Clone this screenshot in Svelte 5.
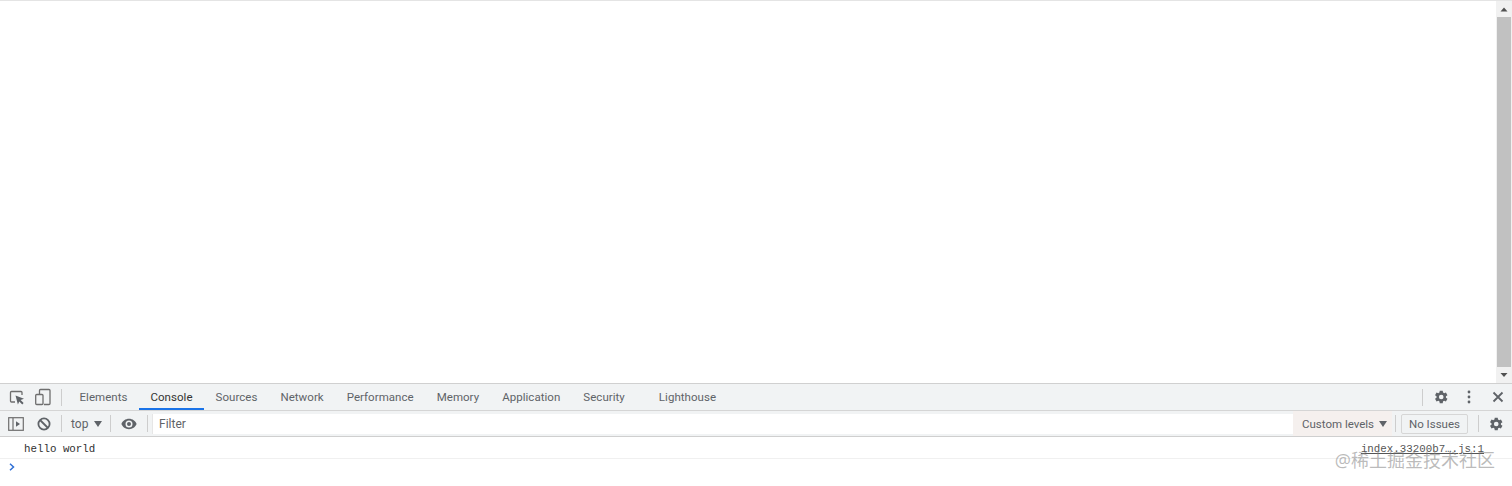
<script>
  const tabs = ['Elements', 'Console', 'Sources', 'Network', 'Performance', 'Memory', 'Application', 'Security', 'Lighthouse'];
</script>

<div class="window">
  <div class="page">
    <div class="viewport"></div>
    <div class="scrollbar">
      <svg class="arrow" width="16" height="16" viewBox="0 0 16 16"><path d="M4.500 10.500 8 6.500l3.500 4z" fill="#505050" /></svg>
      <div class="track"><div class="thumb"></div></div>
      <svg class="arrow" width="16" height="16" viewBox="0 0 16 16"><path d="M4.500 6 8 10l3.500-4z" fill="#505050" /></svg>
    </div>
  </div>

  <div class="devtools">
    <div class="tabbar">
      <button class="icon first" aria-label="Inspect">
        <svg width="18" height="18" viewBox="0 0 18 18" fill="none">
          <path d="M7 14H3.500a1 1 0 0 1-1-1V4.500a1 1 0 0 1 1-1H13a1 1 0 0 1 1 1V7" stroke="#6e6e6e" stroke-width="1.300" />
          <path d="M7.500 7.500 16 10.800l-3.400 1.300 3 3-1.300 1.300-3-3-1.400 3.200z" fill="#5f6368" />
        </svg>
      </button>
      <button class="icon" aria-label="Device">
        <svg width="18" height="18" viewBox="0 0 18 18" fill="none" stroke="#6e6e6e" stroke-width="1.300">
          <path d="M5.500 6V2.500a1 1 0 0 1 1-1h8.500a1 1 0 0 1 1 1v13a1 1 0 0 1-1 1H10" />
          <rect x="1.700" y="6.500" width="7.300" height="10" rx="1" />
        </svg>
      </button>
      <span class="sep tab-sep"></span>
      <nav class="tabs">
        {#each tabs as tab}
          <span class="tab" class:active={tab === 'Console'} class:last={tab === 'Lighthouse'}>{tab}</span>
        {/each}
      </nav>
      <div class="spacer"></div>
      <span class="sep"></span>
      <button class="icon right" aria-label="Settings">
        <svg width="16" height="16" viewBox="0 0 24 24"><path fill="#5f6368" fill-rule="evenodd" d="M19.400 13a7.500 7.500 0 0 0 0-2l2.300-1.800-2.300-3.900-2.700 1.100a7.500 7.500 0 0 0-1.700-1L14.600 2.500h-4.500L9.700 5.400a7.500 7.500 0 0 0-1.700 1L5.300 5.300 3 9.200 5.300 11a7.500 7.500 0 0 0 0 2L3 14.800l2.300 3.900L8 17.600a7.500 7.500 0 0 0 1.700 1l.4 2.900h4.500l.4-2.900a7.500 7.500 0 0 0 1.700-1l2.700 1.100 2.300-3.900zM12.350 15.500a3.500 3.500 0 1 1 0-7 3.500 3.500 0 0 1 0 7z" /></svg>
      </button>
      <button class="icon dots" aria-label="More">
        <svg width="4" height="14" viewBox="0 0 4 14"><circle cx="2" cy="2" r="1.400" fill="#5f6368" /><circle cx="2" cy="7" r="1.400" fill="#5f6368" /><circle cx="2" cy="12" r="1.400" fill="#5f6368" /></svg>
      </button>
      <button class="icon close" aria-label="Close">
        <svg width="12" height="12" viewBox="0 0 12 12"><path d="M1.500 1.500l9 9m0-9l-9 9" stroke="#5f6368" stroke-width="1.800" /></svg>
      </button>
    </div>

    <div class="toolbar">
      <button class="icon first" aria-label="Show sidebar">
        <svg width="16" height="14" viewBox="0 0 16 14" fill="none">
          <rect x="0.700" y="0.700" width="14.600" height="12.600" stroke="#6e6e6e" stroke-width="1.200" />
          <path d="M5 1v12" stroke="#6e6e6e" stroke-width="1.200" />
          <path d="M8 4.200 12 7 8 9.800z" fill="#5f6368" />
        </svg>
      </button>
      <button class="icon clear" aria-label="Clear console">
        <svg width="14" height="14" viewBox="0 0 14 14" fill="none" stroke="#5f6368" stroke-width="1.800">
          <circle cx="7" cy="7" r="5.600" />
          <path d="M3 3l8 8" />
        </svg>
      </button>
      <span class="sep ctx-sep"></span>
      <span class="context">top<i class="caret"></i></span>
      <span class="sep"></span>
      <button class="icon eye" aria-label="Live expressions">
        <svg width="16" height="12" viewBox="0 0 16 12"><path fill="#5f6368" fill-rule="evenodd" d="M8 .8C4.500.8 1.600 3 .4 6c1.200 3 4.100 5.200 7.600 5.200S14.400 9 15.600 6C14.400 3 11.500.8 8 .8zM8 9.500a3.500 3.500 0 1 1 0-7 3.500 3.500 0 0 1 0 7zM8 4a2 2 0 1 0 0 4 2 2 0 0 0 0-4z" /></svg>
      </button>
      <span class="sep"></span>
      <div class="filter">Filter</div>
      <span class="levels">Custom levels<i class="caret"></i></span>
      <span class="sep"></span>
      <span class="issues">No Issues</span>
      <span class="sep"></span>
      <button class="icon gear" aria-label="Console settings">
        <svg width="16" height="16" viewBox="0 0 24 24"><path fill="#5f6368" fill-rule="evenodd" d="M19.400 13a7.500 7.500 0 0 0 0-2l2.300-1.800-2.300-3.900-2.700 1.100a7.500 7.500 0 0 0-1.700-1L14.600 2.500h-4.500L9.700 5.400a7.500 7.500 0 0 0-1.700 1L5.300 5.300 3 9.200 5.300 11a7.500 7.500 0 0 0 0 2L3 14.800l2.300 3.900L8 17.600a7.500 7.500 0 0 0 1.700 1l.4 2.900h4.500l.4-2.900a7.500 7.500 0 0 0 1.700-1l2.700 1.100 2.300-3.900zM12.350 15.500a3.500 3.500 0 1 1 0-7 3.500 3.500 0 0 1 0 7z" /></svg>
      </button>
    </div>

    <div class="console">
      <div class="message">
        <span class="text">hello world</span>
        <span class="source">index.33200b7….js:1</span>
      </div>
      <div class="prompt">
        <svg width="6" height="8" viewBox="0 0 6 8" fill="none"><path d="M1 .8 4.500 4 1 7.200" stroke="#2f6fd6" stroke-width="1.500" /></svg>
      </div>
    </div>
  </div>

  <div class="watermark">@稀土掘金技术社区</div>
</div>

<style>
  :global(body) {
    margin: 0;
    background: #fff;
  }

  .window {
    position: relative;
    display: flex;
    flex-direction: column;
    width: 1512px;
    height: 486px;
    overflow: hidden;
    font-family: Roboto, "Open Sans", sans-serif;
    color: #5f6368;
  }

  .page {
    display: flex;
    height: 383px;
    border-top: 1px solid #e4e4e4;
    box-sizing: border-box;
  }

  .viewport {
    flex: 1;
  }

  .scrollbar {
    display: flex;
    flex-direction: column;
    width: 16px;
    background: #f1f1f1;
  }

  .arrow {
    flex: none;
    height: 16px;
  }

  .track {
    flex: 1;
    padding: 0 1px;
  }

  .thumb {
    height: 100%;
    background: #c1c1c1;
  }

  .devtools {
    flex: 1;
    display: flex;
    flex-direction: column;
  }

  .tabbar {
    display: flex;
    align-items: center;
    height: 26px;
    background: #f1f3f4;
    border-top: 1px solid #d0d0d0;
    border-bottom: 1px solid #d5d5d5;
  }

  .toolbar {
    display: flex;
    align-items: center;
    height: 25px;
    background: #f1f3f4;
    border-bottom: 1px solid #cfcfcf;
  }

  .icon {
    display: flex;
    align-items: center;
    justify-content: center;
    padding: 0;
    border: 0;
    background: none;
  }

  .tabbar .first {
    margin-left: 8px;
  }

  .tabbar .icon + .icon:not(.dots):not(.close) {
    margin-left: 8px;
  }

  .sep {
    flex: none;
    width: 1px;
    height: 17px;
    background: #cdcdcd;
  }

  .tab-sep {
    margin-left: 9px;
  }

  .tabs {
    display: flex;
    height: 100%;
    margin-left: 6px;
  }

  .tab {
    display: flex;
    align-items: center;
    padding: 2px 11.500px 0;
    font-size: 11.500px;
    letter-spacing: 0.04px;
    border-bottom: 2px solid transparent;
    box-sizing: border-box;
    white-space: nowrap;
  }

  .tab.active {
    color: #333;
    border-bottom-color: #1a73e8;
  }

  .tab.last {
    margin-left: 11px;
  }

  .spacer {
    flex: 1;
  }

  .right {
    margin-left: 10px;
  }

  .dots {
    margin-left: 18px;
  }

  .close {
    margin: 0 8px 0 21px;
  }

  .toolbar .first {
    margin-left: 8px;
  }

  .clear {
    margin-left: 13px;
  }

  .ctx-sep {
    margin-left: 10px;
  }

  .context {
    display: flex;
    align-items: center;
    gap: 6px;
    width: 48px;
    padding-left: 9px;
    font-size: 12px;
    box-sizing: border-box;
  }

  .caret {
    display: block;
    width: 0;
    height: 0;
    border-left: 4px solid transparent;
    border-right: 4px solid transparent;
    border-top: 6px solid #5f6368;
  }

  .eye {
    margin: 0 10px;
  }

  .filter {
    align-self: center;
    width: 1141px;
    height: 20px;
    margin-left: 4px;
    padding-left: 6px;
    background: #fff;
    border: 1px solid #e6e6e6;
    border-width: 0 0 0 1px;
    box-sizing: border-box;
    font-size: 12px;
    line-height: 20px;
  }

  .levels {
    display: flex;
    align-items: center;
    gap: 5px;
    width: 99px;
    height: 100%;
    margin-right: 3px;
    padding-left: 9px;
    background: #f5f0ee;
    font-size: 11.500px;
    box-sizing: border-box;
  }

  .issues {
    width: 67px;
    height: 20px;
    margin: 0 10px 0 5px;
    border: 1px solid #d6d6d6;
    border-radius: 2px;
    font-size: 11.500px;
    line-height: 19px;
    text-align: center;
    box-sizing: border-box;
  }

  .gear {
    margin-left: 9px;
  }

  .console {
    flex: 1;
    background: #fff;
  }

  .message {
    display: flex;
    justify-content: space-between;
    height: 22px;
    padding: 0 28px 0 24px;
    border-bottom: 1px solid #f0f0f0;
    box-sizing: border-box;
    font-family: "Liberation Mono", monospace;
    font-size: 10.800px;
    line-height: 24px;
    color: #303030;
  }

  .source {
    color: #555;
    text-decoration: underline;
  }

  .prompt {
    display: flex;
    align-items: center;
    height: 16px;
    padding-left: 9px;
  }

  .watermark {
    position: absolute;
    right: 17px;
    top: 449px;
    font-family: "Open Sans", "Noto Sans CJK SC", sans-serif;
    font-size: 18px;
    line-height: 22px;
    color: rgba(120, 120, 120, 0.5);
  }
</style>
